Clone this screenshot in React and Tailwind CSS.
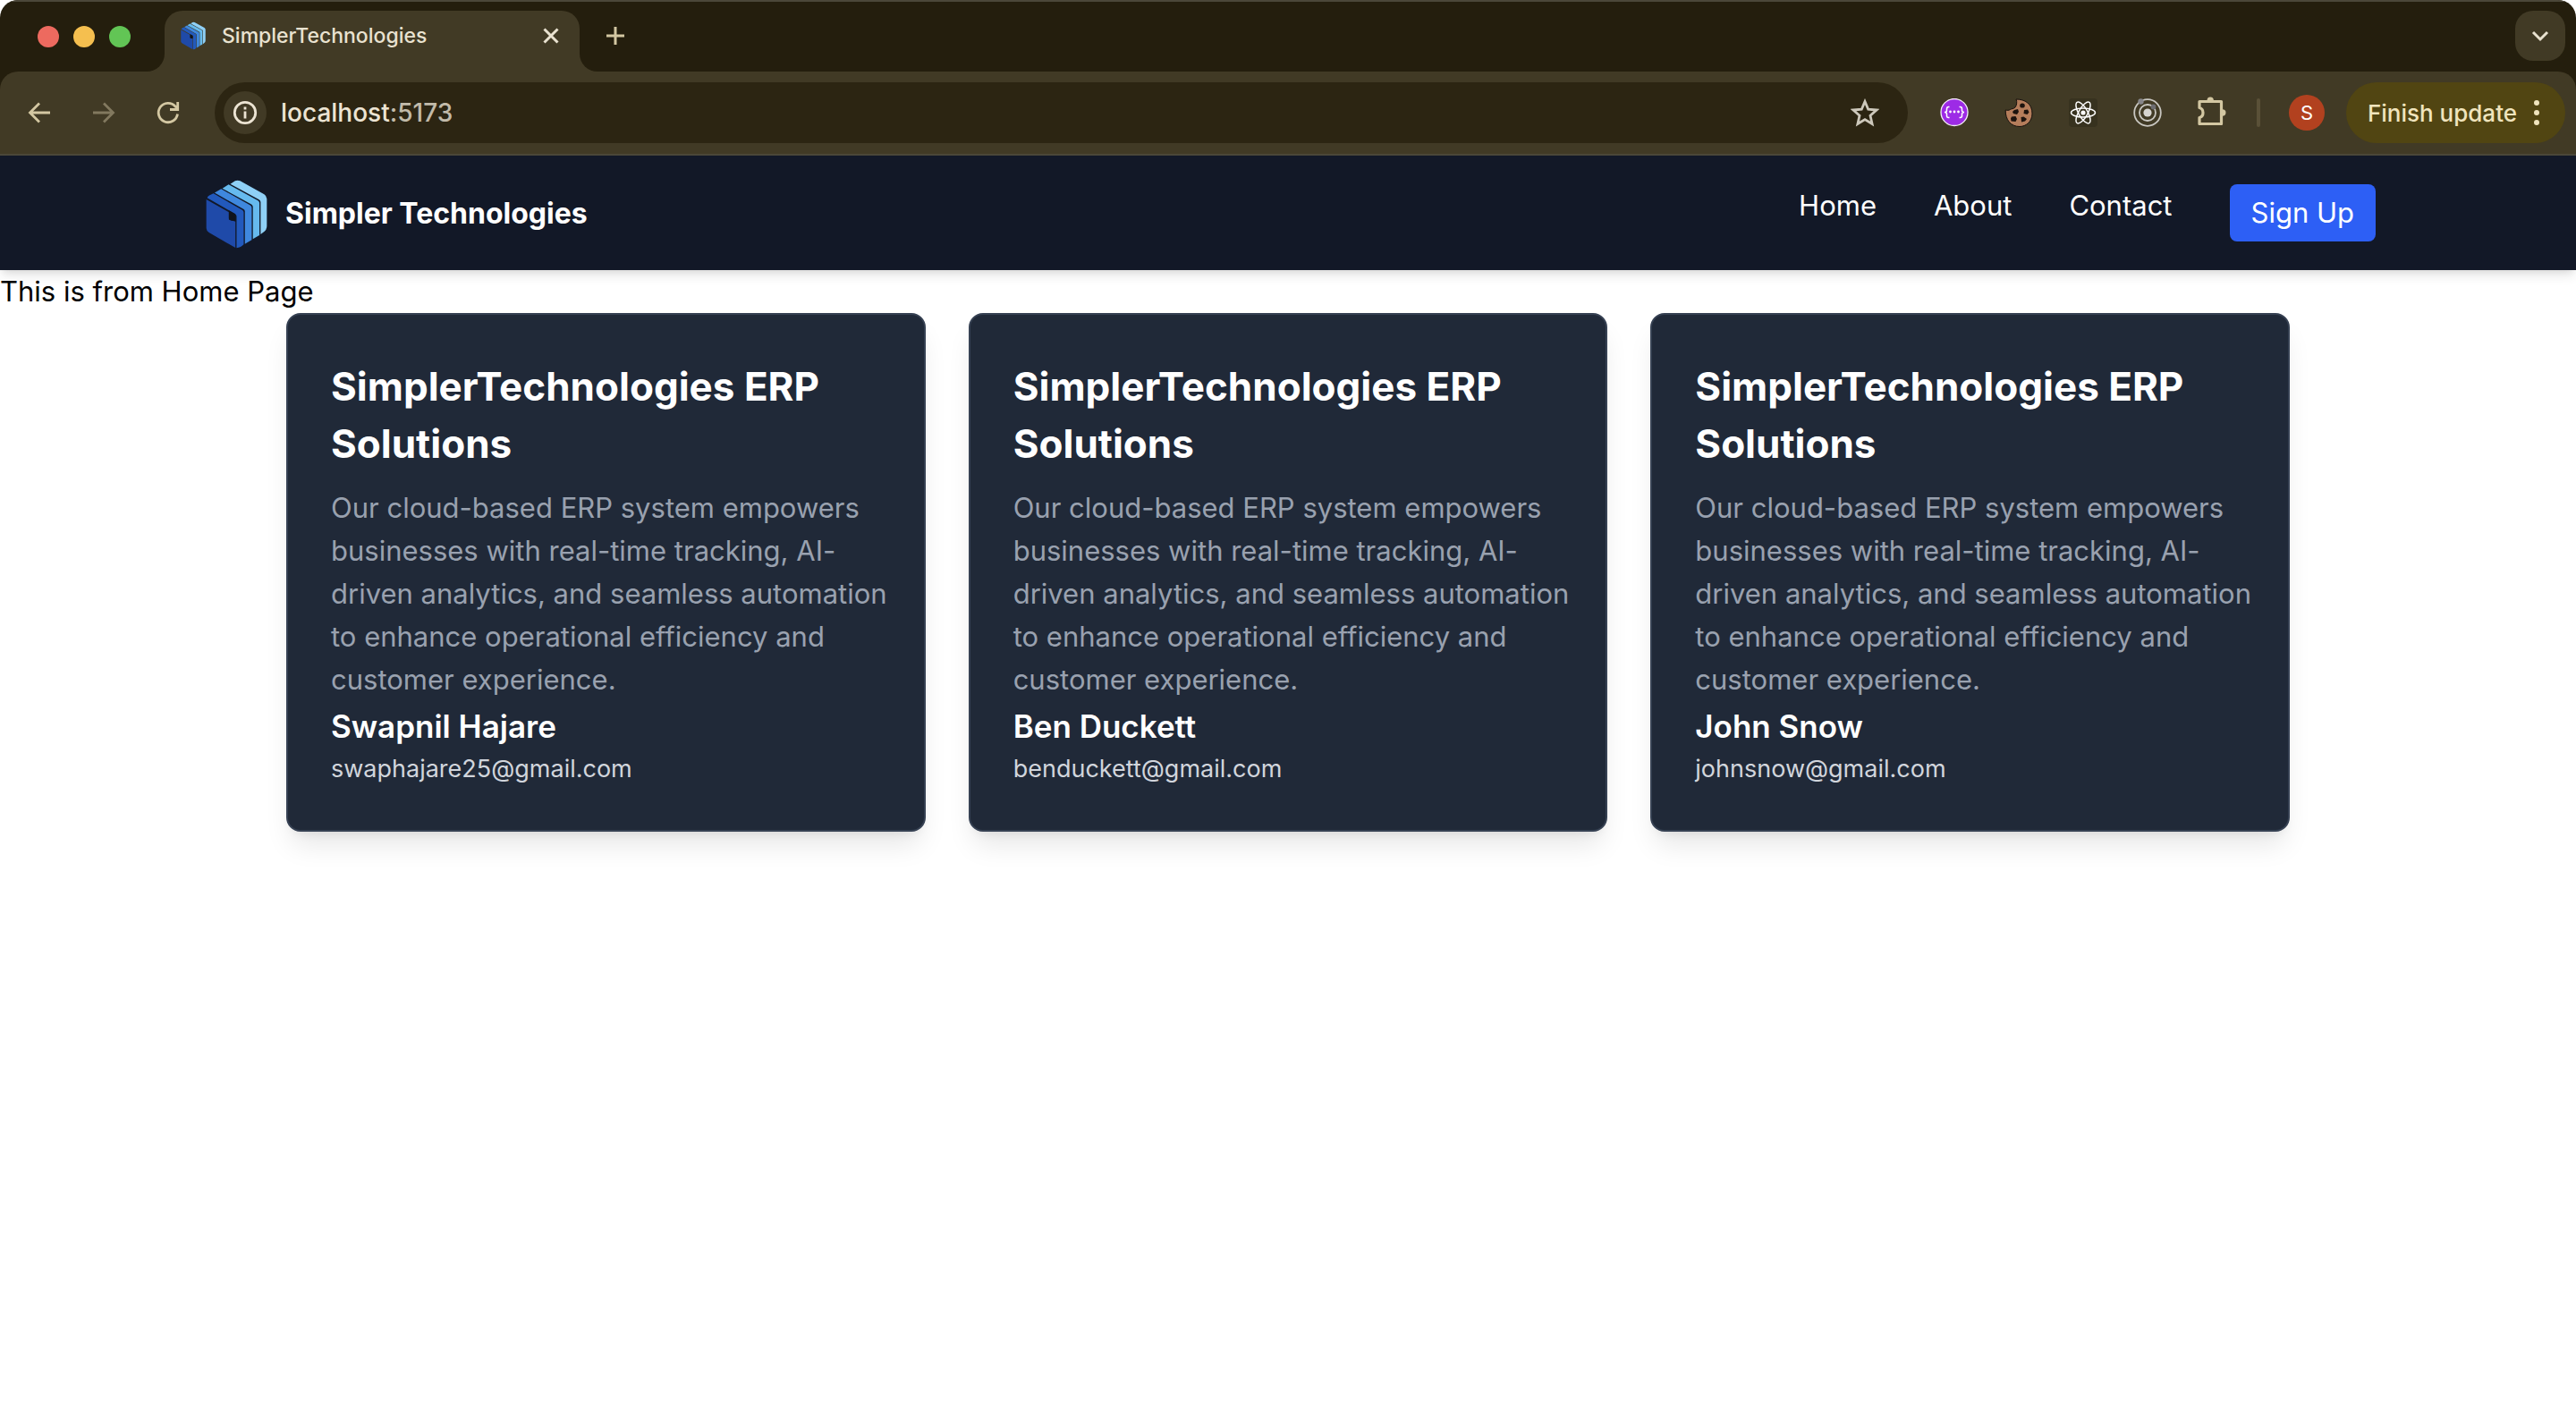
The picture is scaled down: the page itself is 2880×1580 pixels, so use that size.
const description =
  "Our cloud-based ERP system empowers businesses with real-time tracking, AI-driven analytics, and seamless automation to enhance operational efficiency and customer experience.";

const people = [
  { name: "Swapnil Hajare", email: "swaphajare25@gmail.com" },
  { name: "Ben Duckett", email: "benduckett@gmail.com" },
  { name: "John Snow", email: "johnsnow@gmail.com" },
];

function CubeLogo({ className }) {
  return (
    <svg viewBox="31 36 208 230" className={className} aria-hidden="true">
      <path fill="#8fd0f6" d="M114 49 L130 39 Q138 35 147 39 L228 84 Q237 90 237 99 L237 192 Q236 204 229 209 L216 219 L216 110 Q216 105 211 102 Z" />
      <path fill="#66baee" d="M87 64 L108 51 L207 105 Q212 108 212 113 L212 222 L190 235 L190 126 Q190 121 185 118 Z" />
      <path fill="#3f88de" d="M61 79 L83 66 L181 121 Q186 124 186 129 L186 238 L163 251 L163 141 Q163 137 158 134 Z" />
      <path fill="#2259bc" d="M36 96 Q37 91 43 88 L57 81 L154 137 Q159 140 159 145 L159 253 Q150 264 135 265 L135 158 Q135 153 130 150 Z" />
      <path fill="#1f4aa9" d="M33 101 L109 144 L109 169 L131 176 L131 264 L42 213 Q33 207 33 198 Z" />
      <path fill="#10131c" d="M109 138 L131 150 L131 173 L118 173 Q109 171 109 163 Z" />
    </svg>
  );
}

function Stroke({ className, children, width = 2.4 }) {
  return (
    <svg viewBox="0 0 32 32" className={className} fill="none" stroke="currentColor" strokeWidth={width} aria-hidden="true">
      {children}
    </svg>
  );
}

function TabStrip() {
  return (
    <div className="flex h-20 items-end border-t-2 border-[#4b4739] bg-[#241e0d] pl-[42px] pr-3">
      <div className="flex h-full items-center gap-4 pr-3.5">
        <button aria-label="Close window" className="size-6 rounded-full bg-[#ed6a5f]" />
        <button aria-label="Minimize window" className="size-6 rounded-full bg-[#f5bf4f]" />
        <button aria-label="Zoom window" className="size-6 rounded-full bg-[#62c555]" />
      </div>
      <div className="size-6 bg-[#413a25]">
        <div className="h-full rounded-br-[20px] bg-[#241e0d]" />
      </div>
      <div className="flex h-[68px] w-[464px] items-center rounded-t-[20px] bg-[#413a25] pb-3 pl-[18px] pr-5">
        <CubeLogo className="h-8 w-7" />
        <span className="ml-[18px] flex-1 text-[23px] font-medium text-[#e9e2d0]">SimplerTechnologies</span>
        <button aria-label="Close tab" className="text-[#e9e2d0]">
          <Stroke className="size-6" width={4}><path d="M6 6 26 26M26 6 6 26" /></Stroke>
        </button>
      </div>
      <div className="size-6 bg-[#413a25]">
        <div className="h-full rounded-bl-[20px] bg-[#241e0d]" />
      </div>
      <button aria-label="New tab" className="mb-6 text-[#d3c7a2]">
        <Stroke className="size-8" width={3}><path d="M16 6v20M6 16h20" /></Stroke>
      </button>
      <button aria-label="Search tabs" className="mb-3 ml-auto flex size-14 items-center justify-center rounded-[20px] bg-[#413a25] text-[#e9e2d0]">
        <Stroke className="size-8" width={3}><path d="m8 12 8 8 8-8" /></Stroke>
      </button>
    </div>
  );
}

function Extensions() {
  return (
    <div className="flex items-center gap-10">
      <button aria-label="Swagger">
        <svg viewBox="0 0 32 32" className="size-8" fill="none" aria-hidden="true">
          <circle cx="16" cy="15.500" r="15" fill="#9d2be6" stroke="#f4eef8" strokeWidth="1.300" />
          <path stroke="#fff" strokeWidth="1.500" d="M10.500 9.500H9.500Q7.500 9.500 7.500 12v1.500Q7.500 15.500 5 15.500 7.500 15.500 7.500 17.500V19.500Q7.500 21.500 9.500 21.500H10.500M21.500 9.500H22.500Q24.500 9.500 24.500 12v1.500Q24.500 15.500 27 15.500 24.500 15.500 24.500 17.500V19.500Q24.500 21.500 22.500 21.500H21.500" />
          <g fill="#fff"><circle cx="11.500" cy="15" r="1.400" /><circle cx="16" cy="15" r="1.400" /><circle cx="20.500" cy="15" r="1.400" /></g>
        </svg>
      </button>
      <button aria-label="Cookies">
        <svg viewBox="0 0 32 32" className="size-8" aria-hidden="true">
          <path d="M13 1C23 1 31 6 31 17 31 26 24 31.500 17 31.500 7 31.500 1 24 1.200 13 3 13.500 5 13.500 6.500 12.500 7.500 11.500 10 12 12 10 13.500 8 14.500 4 13 1Z" fill="#b57d5b" stroke="#17110d" strokeWidth="1" />
          <g fill="#1d130e">
            <ellipse cx="20" cy="8" rx="2.800" ry="2.600" />
            <path d="m11 13 4-1 1 3-2 3-4-1-1-2zM22 13l4-.5 1.500 3-2 2.500-4-1zM8 20.500l4.500-.5 1.500 3-1.500 3-5-.5-.5-3zM18.500 21l3-.5 3.500 2.500-2 2.500-4 1z" />
          </g>
        </svg>
      </button>
      <button aria-label="React Developer Tools" className="rounded-sm bg-[#37321f] text-white">
        <Stroke className="size-8" width={1.5}>
          <ellipse cx="16" cy="16" rx="13.500" ry="5" />
          <ellipse cx="16" cy="16" rx="13.500" ry="5" transform="rotate(60 16 16)" />
          <ellipse cx="16" cy="16" rx="13.500" ry="5" transform="rotate(120 16 16)" />
          <circle cx="16" cy="16" r="2.600" fill="currentColor" stroke="none" />
        </Stroke>
      </button>
      <button aria-label="Orbit">
        <svg viewBox="0 0 32 32" className="size-8" fill="none" aria-hidden="true">
          <circle cx="16" cy="16" r="14.800" stroke="#c9c7c1" strokeWidth="1.800" />
          <circle cx="16" cy="16" r="9" stroke="#c9c7c1" strokeWidth="1.800" />
          <circle cx="16" cy="16" r="4.600" fill="#d6d4d0" />
          <circle cx="8.500" cy="3.500" r="3.200" fill="#87868a" />
          <circle cx="22.500" cy="9.500" r="2.900" fill="#6c6c70" />
        </svg>
      </button>
      <button aria-label="Extensions" className="mb-1 text-[#d3c7a2]">
        <svg viewBox="0 0 32 32" className="size-8" fill="none" aria-hidden="true">
          <path stroke="currentColor" strokeWidth="3.200" strokeLinejoin="round" d="M2 5.500H26.500V30.500H2V23.500Q6 22.500 6 18 6 13.500 2 12.500Z" />
          <path fill="currentColor" d="M10.500 4.500a3.700 4 0 0 1 7.400 0ZM27.500 14.300a4 3.700 0 0 1 0 7.400Z" />
        </svg>
      </button>
    </div>
  );
}

function Toolbar() {
  return (
    <div className="bg-[#241e0d]">
      <div className="flex h-[94px] items-center rounded-t-[20px] border-b-2 border-[#4b4739] bg-[#413a25] pl-7 pr-3">
        <button aria-label="Back" className="text-[#d3c7a2]">
          <Stroke className="size-8" width={2.800}><path d="M28 16H6M16 5.500 5.500 16 16 26.500" /></Stroke>
        </button>
        <button aria-label="Forward" className="ml-10 text-[#82795f]">
          <Stroke className="size-8" width={2.800}><path d="M4 16h22M16 5.500 26.500 16 16 26.500" /></Stroke>
        </button>
        <button aria-label="Reload" className="ml-10 text-[#d3c7a2]">
          <Stroke className="size-8" width={2.800}><path d="M26.500 17.500A10.700 10.700 0 1 1 24 9l2 2.500M26.700 4v8.500H18" /></Stroke>
        </button>
        <div className="ml-9 flex h-[68px] flex-1 items-center rounded-full bg-[#2c2512] pl-2.5 pr-8">
          <button aria-label="View site information" className="flex size-12 items-center justify-center rounded-full bg-[#413a25] text-[#ece4d3]">
            <Stroke className="size-8" width={2.800}>
              <circle cx="16" cy="16" r="11.700" />
              <path d="M16 14.500v8M16 9.500v3" />
            </Stroke>
          </button>
          <div className="ml-4 flex-1 text-[28px] font-medium text-[#ece4d3]">localhost<span className="text-[#c2bbaa]">:5173</span></div>
          <button aria-label="Bookmark this tab" className="text-[#cdc8bb]">
            <Stroke className="size-8" width={2.800}>
              <path d="m16 3.500 3.700 8.700 9.300.8-7 6.200 2.100 9.300L16 23.600l-8.100 4.900L10 19.200 3 13l9.300-.8Z" />
            </Stroke>
          </button>
        </div>
        <div className="pl-9 pr-[34px]"><Extensions /></div>
        <div className="h-8 w-1 rounded-full bg-[#5a5138]" />
        <button aria-label="Profile" className="ml-8 size-10 rounded-full bg-[#b2411f] text-[22px] text-white">S</button>
        <button className="ml-6 flex h-[68px] items-center rounded-full bg-[#514512] pl-6 pr-[26px] text-[26px] font-medium text-[#f0e4bd]">
          Finish update
          <svg viewBox="0 0 12 32" className="ml-4 h-8 w-3" fill="currentColor" aria-hidden="true">
            <circle cx="6" cy="5" r="3" /><circle cx="6" cy="16" r="3" /><circle cx="6" cy="27" r="3" />
          </svg>
        </button>
      </div>
    </div>
  );
}

function Navbar() {
  return (
    <nav className="flex h-32 items-center justify-between bg-[#121827] px-56 text-[31px] leading-[48px] text-white shadow-[0_8px_12px_-2px_rgba(0,0,0,0.1),0_4px_8px_-4px_rgba(0,0,0,0.1)]">
      <a href="#home" className="flex items-center pt-0.5">
        <CubeLogo className="mx-1.5 h-[77px] w-[69px]" />
        <span className="ml-3.5 text-[32px] font-bold">Simpler Technologies</span>
      </a>
      <ul className="flex gap-16">
        <li><a href="#home">Home</a></li>
        <li><a href="#about">About</a></li>
        <li><a href="#contact">Contact</a></li>
        <li><button className="block rounded-lg bg-[#2d5ff5] px-6 py-2">Sign Up</button></li>
      </ul>
    </nav>
  );
}

function Card({ name, email }) {
  return (
    <article className="rounded-2xl border-2 border-[#364153] bg-[#202938] py-12 pl-12 pr-8 shadow-[0_20px_30px_-6px_rgba(0,0,0,0.1),0_8px_12px_-8px_rgba(0,0,0,0.1)]">
      <h2 className="mb-4 text-[44px] font-bold leading-[64px] text-white">SimplerTechnologies ERP Solutions</h2>
      <p className="text-[31px] leading-[48px] text-[#99a1af]">{description}</p>
      <h3 className="text-[35px] font-semibold leading-[56px] text-white">{name}</h3>
      <p className="text-[27px] leading-10 text-[#d1d5dc]">{email}</p>
    </article>
  );
}

export default function App() {
  return (
    <div className="min-h-screen bg-white font-['Inter',sans-serif]">
      <header className="overflow-hidden rounded-t-[20px]">
        <TabStrip />
        <Toolbar />
      </header>
      <Navbar />
      <main>
        <p className="text-[31px] leading-[48px] text-black">This is from Home Page</p>
        <section className="mx-auto grid max-w-[2240px] grid-cols-3 gap-12">
          {people.map((person) => <Card key={person.email} {...person} />)}
        </section>
      </main>
    </div>
  );
}
